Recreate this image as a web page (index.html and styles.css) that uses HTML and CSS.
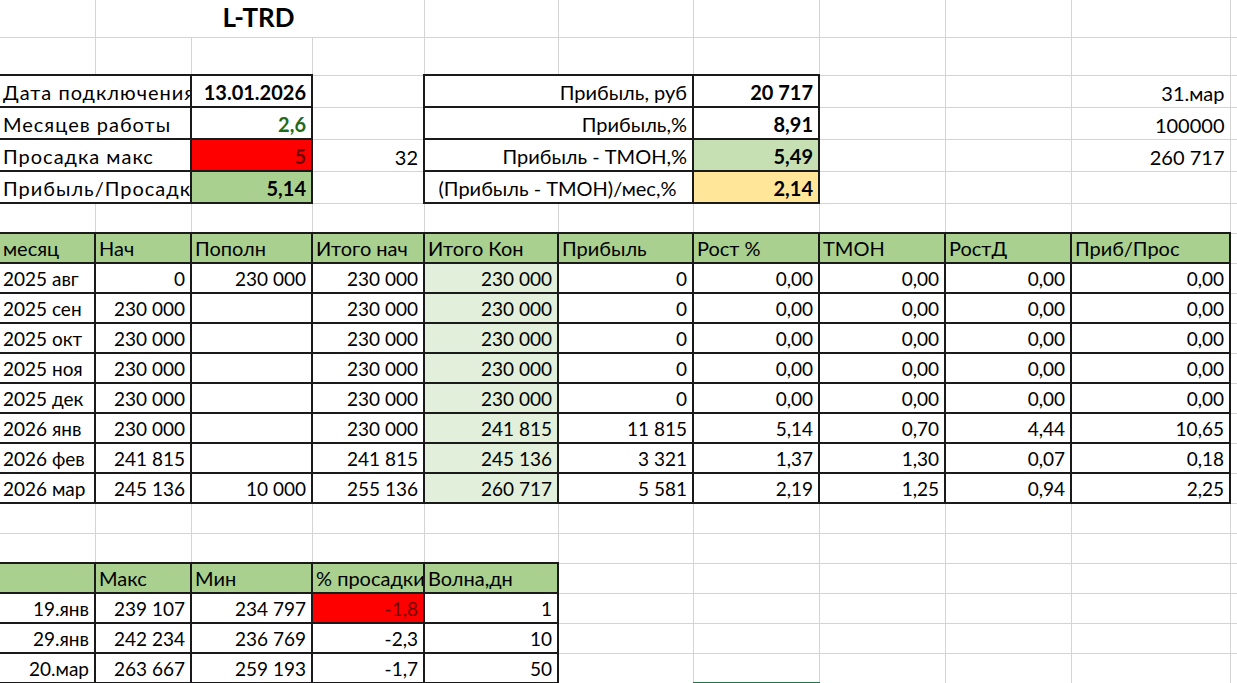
FILE: index.html
```html
<!DOCTYPE html>
<html lang="ru">
<head>
<meta charset="utf-8">
<title>L-TRD</title>
<link rel="stylesheet" href="styles.css">
</head>
<body>
<table class="sheet">
<colgroup>
<col class="cA"><col class="cB"><col class="cC"><col class="cD"><col class="cE"><col class="cF"><col class="cG"><col class="cH"><col class="cI"><col class="cJ"><col class="cK">
</colgroup>
<tbody>
<tr class="h1"><td></td><td colspan="3" class="title c">L-TRD</td><td></td><td></td><td></td><td></td><td></td><td></td><td></td></tr>
<tr class="h2"><td></td><td></td><td></td><td></td><td></td><td></td><td></td><td></td><td></td><td></td><td></td></tr>
<tr class="h3"><td colspan="2" class="b lbl">Дата подключения</td><td class="b r bold">13.01.2026</td><td></td><td colspan="2" class="b r">Прибыль, руб</td><td class="b r bold">20 717</td><td></td><td></td><td class="r">31.мар</td><td></td></tr>
<tr class="h3"><td colspan="2" class="b lbl">Месяцев работы</td><td class="b r bold good">2,6</td><td></td><td colspan="2" class="b r">Прибыль,%</td><td class="b r bold">8,91</td><td></td><td></td><td class="r">100000</td><td></td></tr>
<tr class="h3"><td colspan="2" class="b lbl">Просадка макс</td><td class="b r bold red">5</td><td class="r">32</td><td colspan="2" class="b r">Прибыль - ТМОН,%</td><td class="b r bold g2">5,49</td><td></td><td></td><td class="r">260 717</td><td></td></tr>
<tr class="h3"><td colspan="2" class="b lbl">Прибыль/Просадка</td><td class="b r bold g1">5,14</td><td></td><td colspan="2" class="b c">(Прибыль - ТМОН)/мес,%</td><td class="b r bold yel">2,14</td><td></td><td></td><td></td><td></td></tr>
<tr class="h4"><td></td><td></td><td></td><td></td><td></td><td></td><td></td><td></td><td></td><td></td><td></td></tr>
<tr class="h4 head"><td class="b g1">месяц</td><td class="b g1">Нач</td><td class="b g1">Пополн</td><td class="b g1">Итого нач</td><td class="b g1">Итого Кон</td><td class="b g1">Прибыль</td><td class="b g1">Рост %</td><td class="b g1">ТМОН</td><td class="b g1">РостД</td><td class="b g1">Приб/Прос</td><td></td></tr>
<tr class="h4"><td class="b">2025 авг</td><td class="b r">0</td><td class="b r">230 000</td><td class="b r">230 000</td><td class="b r lg">230 000</td><td class="b r">0</td><td class="b r">0,00</td><td class="b r">0,00</td><td class="b r">0,00</td><td class="b r">0,00</td><td></td></tr>
<tr class="h4"><td class="b">2025 сен</td><td class="b r">230 000</td><td class="b r"></td><td class="b r">230 000</td><td class="b r lg">230 000</td><td class="b r">0</td><td class="b r">0,00</td><td class="b r">0,00</td><td class="b r">0,00</td><td class="b r">0,00</td><td></td></tr>
<tr class="h4"><td class="b">2025 окт</td><td class="b r">230 000</td><td class="b r"></td><td class="b r">230 000</td><td class="b r lg">230 000</td><td class="b r">0</td><td class="b r">0,00</td><td class="b r">0,00</td><td class="b r">0,00</td><td class="b r">0,00</td><td></td></tr>
<tr class="h4"><td class="b">2025 ноя</td><td class="b r">230 000</td><td class="b r"></td><td class="b r">230 000</td><td class="b r lg">230 000</td><td class="b r">0</td><td class="b r">0,00</td><td class="b r">0,00</td><td class="b r">0,00</td><td class="b r">0,00</td><td></td></tr>
<tr class="h4"><td class="b">2025 дек</td><td class="b r">230 000</td><td class="b r"></td><td class="b r">230 000</td><td class="b r lg">230 000</td><td class="b r">0</td><td class="b r">0,00</td><td class="b r">0,00</td><td class="b r">0,00</td><td class="b r">0,00</td><td></td></tr>
<tr class="h4"><td class="b">2026 янв</td><td class="b r">230 000</td><td class="b r"></td><td class="b r">230 000</td><td class="b r lg">241 815</td><td class="b r">11 815</td><td class="b r">5,14</td><td class="b r">0,70</td><td class="b r">4,44</td><td class="b r">10,65</td><td></td></tr>
<tr class="h4"><td class="b">2026 фев</td><td class="b r">241 815</td><td class="b r"></td><td class="b r">241 815</td><td class="b r lg">245 136</td><td class="b r">3 321</td><td class="b r">1,37</td><td class="b r">1,30</td><td class="b r">0,07</td><td class="b r">0,18</td><td></td></tr>
<tr class="h4"><td class="b">2026 мар</td><td class="b r">245 136</td><td class="b r">10 000</td><td class="b r">255 136</td><td class="b r lg">260 717</td><td class="b r">5 581</td><td class="b r">2,19</td><td class="b r">1,25</td><td class="b r">0,94</td><td class="b r">2,25</td><td></td></tr>
<tr class="h4"><td></td><td></td><td></td><td></td><td></td><td></td><td></td><td></td><td></td><td></td><td></td></tr>
<tr class="h4"><td></td><td></td><td></td><td></td><td></td><td></td><td></td><td></td><td></td><td></td><td></td></tr>
<tr class="h4 head"><td class="b g1"></td><td class="b g1">Макс</td><td class="b g1">Мин</td><td class="b g1">% просадки</td><td class="b g1">Волна,дн</td><td></td><td></td><td></td><td></td><td></td><td></td></tr>
<tr class="h4"><td class="b r">19.янв</td><td class="b r">239 107</td><td class="b r">234 797</td><td class="b r red">-1,8</td><td class="b r">1</td><td></td><td></td><td></td><td></td><td></td><td></td></tr>
<tr class="h4"><td class="b r">29.янв</td><td class="b r">242 234</td><td class="b r">236 769</td><td class="b r">-2,3</td><td class="b r">10</td><td></td><td></td><td></td><td></td><td></td><td></td></tr>
<tr class="h4"><td class="b r">20.мар</td><td class="b r">263 667</td><td class="b r">259 193</td><td class="b r">-1,7</td><td class="b r">50</td><td></td><td></td><td></td><td></td><td></td><td></td></tr>
<tr class="h4"><td></td><td></td><td></td><td></td><td></td><td></td><td class="active"></td><td></td><td></td><td></td><td></td></tr>
</tbody>
</table>
</body>
</html>
```

FILE: styles.css
```css
html, body {
  margin: 0;
  padding: 0;
  overflow: hidden;
  background: #fff;
}

.sheet {
  border-collapse: collapse;
  table-layout: fixed;
  width: 1330px;
  font-family: Lato, "Open Sans", "Liberation Sans", sans-serif;
  font-size: 20px;
  color: #000;
}

.cA { width: 95px; }
.cB { width: 96px; }
.cC { width: 121px; }
.cD { width: 112px; }
.cE { width: 134px; }
.cF { width: 135px; }
.cG { width: 126px; }
.cH { width: 126px; }
.cI { width: 126px; }
.cJ { width: 159px; }
.cK { width: 100px; }

.h1 { height: 37px; }
.h2 { height: 38px; }
.h3 { height: 32px; }
.h4 { height: 30px; }

.sheet td {
  border-right: 1px solid #d4d4d4;
  border-bottom: 1px solid #d4d4d4;
  padding: 0 5px 2px 3px;
  white-space: nowrap;
  overflow: hidden;
  vertical-align: bottom;
  line-height: 22px;
}

.h3 td { padding-bottom: 3px; }
.h4 td { font-size: 19px; }
.h4.head td { font-size: 20px; padding-left: 3px; padding-bottom: 3px; }

.sheet td.lbl { letter-spacing: 1px; }

.sheet td.b { border: 2px solid #1a1a1a; }
.sheet tr td:first-child { border-left: none; }

.r { text-align: right; }
.c { text-align: center; }
.bold { font-weight: 700; }

.sheet td.title {
  font-weight: 700;
  font-size: 26px;
  vertical-align: middle;
  padding-bottom: 2px;
}

.good { color: #1e6b1e; }
.red { background: #ff0000; color: #700000; }
.g1 { background: #a9d08e; }
.g2 { background: #c6e0b4; }
.yel { background: #ffe699; }
.lg { background: #e2efda; }

.sheet td.active { border-top: 2px solid #217346; }
```
